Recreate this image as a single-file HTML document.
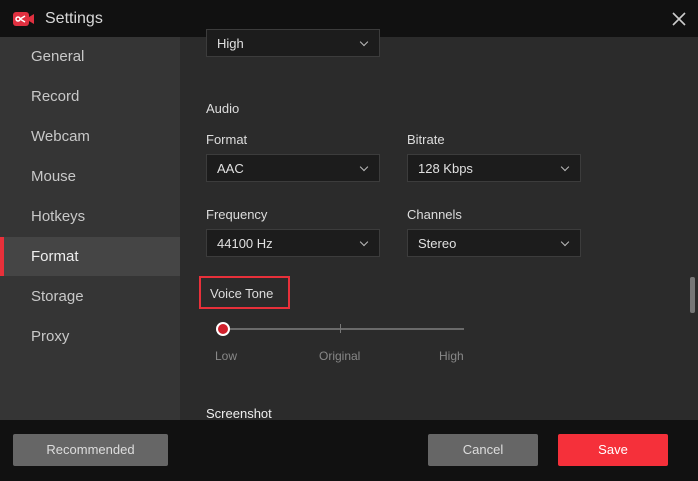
<!DOCTYPE html><html><head><style>
*{margin:0;padding:0;box-sizing:border-box}
body{width:698px;height:481px;overflow:hidden;background:#2b2b2b;font-family:"Liberation Sans",sans-serif;position:relative;color:#ddd}
.a{position:absolute}
.title{left:0;top:0;width:698px;height:37px;background:#111}
.side{left:0;top:37px;width:180px;height:383px;background:#353535}
.item{position:absolute;left:31px;font-size:15px;color:#c8c8c8}
.dd{position:absolute;width:174px;height:28px;background:#1c1c1c;border:1px solid #3c3c3c;font-size:13px;color:#e0e0e0;padding:6px 0 0 10px}
.dd:after{content:"";position:absolute;right:12px;top:9px;width:5px;height:5px;border-right:1.5px solid #bbb;border-bottom:1.5px solid #bbb;transform:rotate(45deg)}
.lbl{position:absolute;font-size:13px;color:#ddd}
.foot{left:0;top:420px;width:698px;height:61px;background:#111}
.btn{position:absolute;top:434px;height:32px;font-size:13px;color:#ddd;text-align:center;line-height:32px;border-radius:2px}
</style></head><body>
<div class="a title"></div>
<svg class="a" style="left:13px;top:11px" width="22" height="16" viewBox="0 0 22 16"><rect x="0" y="1" width="16" height="14" rx="3" fill="#e03040"/><path d="M16 6l5-3v10l-5-3z" fill="#e03040"/><circle cx="5" cy="8" r="2" fill="none" stroke="#fff" stroke-width="1.5"/><path d="M7 8l5-3M7 8l5 3" stroke="#fff" stroke-width="1.5"/></svg>
<div class="a" style="left:45px;top:10px;font-size:16px;color:#d8d8d8">Settings</div>
<svg class="a" style="left:672px;top:12px" width="14" height="14"><path d="M1 1L13 13M13 1L1 13" stroke="#ccc" stroke-width="1.6"/></svg>
<div class="a side"></div>
<div class="item" style="top:48px">General</div>
<div class="item" style="top:88px">Record</div>
<div class="item" style="top:128px">Webcam</div>
<div class="item" style="top:168px">Mouse</div>
<div class="item" style="top:208px">Hotkeys</div>
<div class="a" style="left:0;top:237px;width:180px;height:39px;background:#454545;border-left:4px solid #e8303a"></div>
<div class="item" style="top:248px;color:#eee">Format</div>
<div class="item" style="top:288px">Storage</div>
<div class="item" style="top:328px">Proxy</div>
<div class="dd" style="left:206px;top:29px">High</div>
<div class="lbl" style="left:206px;top:101px">Audio</div>
<div class="lbl" style="left:206px;top:132px">Format</div>
<div class="lbl" style="left:407px;top:132px">Bitrate</div>
<div class="dd" style="left:206px;top:154px">AAC</div>
<div class="dd" style="left:407px;top:154px">128 Kbps</div>
<div class="lbl" style="left:206px;top:207px">Frequency</div>
<div class="lbl" style="left:407px;top:207px">Channels</div>
<div class="dd" style="left:206px;top:229px">44100 Hz</div>
<div class="dd" style="left:407px;top:229px">Stereo</div>
<div class="a" style="left:199px;top:276px;width:91px;height:33px;border:2px solid #e8303a"></div>
<div class="lbl" style="left:210px;top:286px">Voice Tone</div>
<div class="a" style="left:223px;top:328px;width:241px;height:2px;background:#6a6a6a"></div>
<div class="a" style="left:340px;top:324px;width:1px;height:9px;background:#777"></div>
<div class="a" style="left:216px;top:322px;width:14px;height:14px;border-radius:50%;background:#d0202c;border:2px solid #fff"></div>
<div class="a" style="left:215px;top:349px;font-size:12px;color:#888">Low</div>
<div class="a" style="left:319px;top:349px;font-size:12px;color:#888">Original</div>
<div class="a" style="left:439px;top:349px;font-size:12px;color:#888">High</div>
<div class="lbl" style="left:206px;top:406px;color:#eee">Screenshot</div>
<div class="a" style="left:690px;top:277px;width:5px;height:36px;background:#777;border-radius:2px"></div>
<div class="a foot"></div>
<div class="btn" style="left:13px;width:155px;background:#666">Recommended</div>
<div class="btn" style="left:428px;width:110px;background:#666">Cancel</div>
<div class="btn" style="left:558px;width:110px;background:#f5303a;color:#fff">Save</div>
</body></html>
